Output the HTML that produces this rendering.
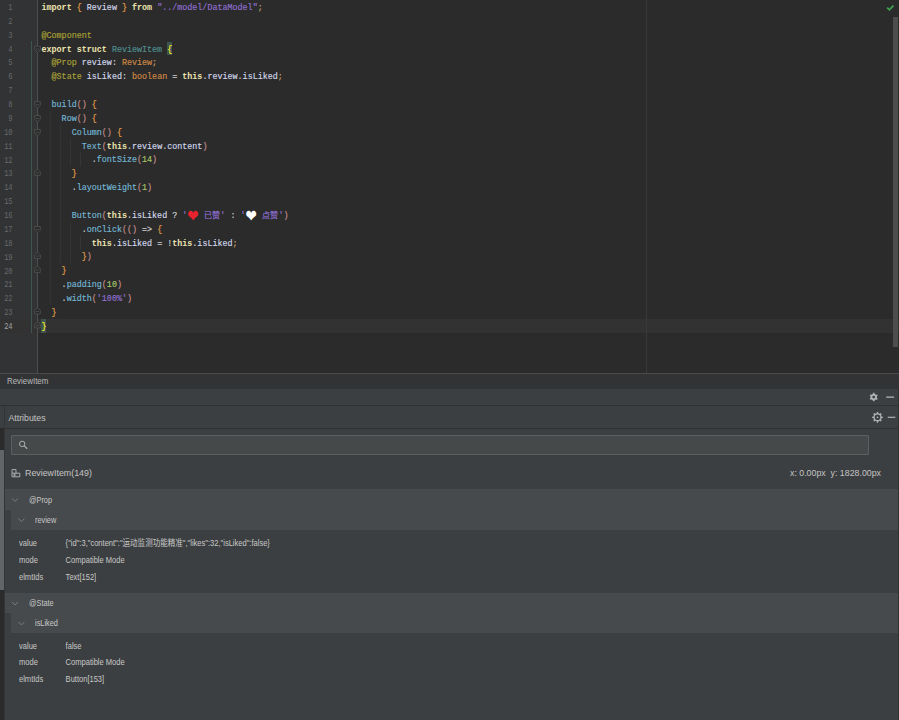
<!DOCTYPE html>
<html><head><meta charset="utf-8">
<style>
*{box-sizing:border-box;margin:0;padding:0}
html,body{width:899px;height:720px;overflow:hidden;background:#2b2b2b}
body{position:relative;font-family:"Liberation Sans","Noto Sans CJK SC",sans-serif;color:#bbbbbb}
.abs{position:absolute}
#editor{position:absolute;left:0;top:0;width:899px;height:373px;background:#2b2b2b;overflow:hidden}
#curline{position:absolute;left:0;top:319px;width:899px;height:14px;background:#323232}
#gutline{position:absolute;left:37px;top:0;width:1px;height:373px;background:#4e4e4e}
#margin{position:absolute;left:646px;top:0;width:1px;height:373px;background:#393939}
#vcs{position:absolute;left:31px;top:41px;width:1px;height:292px;background:#3f5554}
.ln{position:absolute;left:0;margin-top:2px;width:12.6px;transform:scaleX(.84);transform-origin:100% 50%;text-align:right;font:8.4px/13.87px "Liberation Mono",monospace;color:#676a6d;height:13.87px}
.ln.cur{color:#a4a3a3}
#code{position:absolute;left:41.5px;top:2px;font:8.39px/13.87px "Liberation Mono","Noto Sans CJK SC",monospace;color:#d4d4d4;white-space:pre;-webkit-text-stroke:0.15px currentColor}
.l{height:13.87px;display:block}
.k{color:#ebe3ae;font-weight:bold;-webkit-text-stroke:0}
.b{color:#e6a04a}
.i{color:#d3d8ec}
.s{color:#9170d2}
.z{color:#9170d2}
.sc{color:#c9a26d}
.d{color:#a9a236}
.c{color:#4f8f90}
.t{color:#d08a45}
.f{color:#74b6d4}
.n{color:#aac867}
.p{color:#c98f8f}
.o{color:#cfcfcf}
.m{color:#ffef28}
.hh{display:inline-block;width:11.2px;height:13px;text-align:center;font-family:"DejaVu Sans",sans-serif;font-weight:normal;font-size:13.5px;line-height:12.5px;vertical-align:top;-webkit-text-stroke:0;transform:scale(1,1.3);transform-origin:50% 50%}
.z{display:inline-block;width:16.8px;height:13px;font-size:8px;font-weight:normal;text-align:center;vertical-align:top;line-height:11.3px;-webkit-text-stroke:0.2px currentColor}
.h1{color:#e8222e}
.h2{color:#ffffff}
#scroll{position:absolute;left:893px;top:17px;width:5px;height:330px;background:#4d4d4d}
#crumb{position:absolute;left:0;top:373px;width:899px;height:16px;background:#313335;border-top:1px solid #4b4b4b;font-size:7.9px;line-height:15px;padding-left:7px;color:#bbbbbb}
#bar1{position:absolute;left:0;top:389px;width:899px;height:17px;background:#3c3f41;border-bottom:1px solid #2f3133}
#panel{position:absolute;left:0;top:406px;width:899px;height:314px;background:#3c3f41}
#hdr{position:absolute;left:5px;top:0;width:894px;height:23px;border-bottom:1px solid #323232;font-size:8.8px;line-height:24.4px;padding-left:3.4px;color:#c4c4c4}
#search{position:absolute;left:11px;top:29px;width:858px;height:20px;background:#45494a;border:1px solid #5c5f60;border-radius:1px}
.row{position:absolute;background:#464a4c;height:20.5px;font-size:7.6px;line-height:20.5px;color:#c8c8c8}
.row span{display:inline-block;transform:scale(.97,1.14);transform-origin:0 50%}
.kv{transform:scale(.992,1.14);transform-origin:0 55%;position:absolute;left:19px;font-size:7.6px;line-height:12px;height:12px;color:#c8c8c8;white-space:nowrap}
.kv b{position:absolute;left:47px;top:0;font-weight:normal}
</style></head><body>
<div id="editor">
<div class="abs" style="left:0;top:0;width:37px;height:373px;background:#313335"></div>
<div id="curline"></div>
<div class="abs" style="left:166.5px;top:41.6px;width:5.2px;height:13.9px;background:#3e544f"></div>
<div class="abs" style="left:41px;top:319px;width:5.2px;height:14px;background:#3e544f"></div>
<div id="gutline"></div>
<div id="margin"></div>
<div id="vcs"></div>
<div class="ln" style="top:0.00px">1</div><div class="ln" style="top:13.87px">2</div><div class="ln" style="top:27.74px">3</div><div class="ln" style="top:41.61px">4</div><div class="ln" style="top:55.48px">5</div><div class="ln" style="top:69.35px">6</div><div class="ln" style="top:83.22px">7</div><div class="ln" style="top:97.09px">8</div><div class="ln" style="top:110.96px">9</div><div class="ln" style="top:124.83px">10</div><div class="ln" style="top:138.70px">11</div><div class="ln" style="top:152.57px">12</div><div class="ln" style="top:166.44px">13</div><div class="ln" style="top:180.31px">14</div><div class="ln" style="top:194.18px">15</div><div class="ln" style="top:208.05px">16</div><div class="ln" style="top:221.92px">17</div><div class="ln" style="top:235.79px">18</div><div class="ln" style="top:249.66px">19</div><div class="ln" style="top:263.53px">20</div><div class="ln" style="top:277.40px">21</div><div class="ln" style="top:291.27px">22</div><div class="ln" style="top:305.14px">23</div><div class="ln cur" style="top:319.01px">24</div>
<svg class="abs" style="left:0;top:0" width="120" height="373" viewBox="0 0 120 373"><path d="M34.7 46.21h5.6v3.6l-2.8 2.8l-2.8 -2.8z" fill="#2b2b2b" stroke="#4f4f4f" stroke-width="0.9"/><path d="M35.9 49.21h3.2" stroke="#4f4f4f" stroke-width="0.9"/><path d="M34.7 101.69h5.6v3.6l-2.8 2.8l-2.8 -2.8z" fill="#2b2b2b" stroke="#4f4f4f" stroke-width="0.9"/><path d="M35.9 104.69h3.2" stroke="#4f4f4f" stroke-width="0.9"/><path d="M34.7 115.56h5.6v3.6l-2.8 2.8l-2.8 -2.8z" fill="#2b2b2b" stroke="#4f4f4f" stroke-width="0.9"/><path d="M35.9 118.56h3.2" stroke="#4f4f4f" stroke-width="0.9"/><path d="M34.7 129.43h5.6v3.6l-2.8 2.8l-2.8 -2.8z" fill="#2b2b2b" stroke="#4f4f4f" stroke-width="0.9"/><path d="M35.9 132.43h3.2" stroke="#4f4f4f" stroke-width="0.9"/><path d="M34.7 226.52h5.6v3.6l-2.8 2.8l-2.8 -2.8z" fill="#2b2b2b" stroke="#4f4f4f" stroke-width="0.9"/><path d="M35.9 229.52h3.2" stroke="#4f4f4f" stroke-width="0.9"/><path d="M37.5 168.94l2.8 2.8v3.6h-5.6v-3.6z" fill="#2b2b2b" stroke="#4f4f4f" stroke-width="0.9"/><path d="M35.9 172.84h3.2" stroke="#4f4f4f" stroke-width="0.9"/><path d="M37.5 252.16l2.8 2.8v3.6h-5.6v-3.6z" fill="#2b2b2b" stroke="#4f4f4f" stroke-width="0.9"/><path d="M35.9 256.06h3.2" stroke="#4f4f4f" stroke-width="0.9"/><path d="M37.5 266.03l2.8 2.8v3.6h-5.6v-3.6z" fill="#2b2b2b" stroke="#4f4f4f" stroke-width="0.9"/><path d="M35.9 269.93h3.2" stroke="#4f4f4f" stroke-width="0.9"/><path d="M37.5 307.64l2.8 2.8v3.6h-5.6v-3.6z" fill="#2b2b2b" stroke="#4f4f4f" stroke-width="0.9"/><path d="M35.9 311.54h3.2" stroke="#4f4f4f" stroke-width="0.9"/><path d="M37.5 321.51l2.8 2.8v3.6h-5.6v-3.6z" fill="#323232" stroke="#4f4f4f" stroke-width="0.9"/><path d="M35.9 325.41h3.2" stroke="#4f4f4f" stroke-width="0.9"/><path d="M50.3 111.0V305.1" stroke="#363636" stroke-width="1"/><path d="M60.3 124.8V263.5" stroke="#363636" stroke-width="1"/><path d="M70.4 138.7V166.4" stroke="#363636" stroke-width="1"/><path d="M80.5 152.6V166.4" stroke="#363636" stroke-width="1"/><path d="M70.4 221.9V263.5" stroke="#363636" stroke-width="1"/><path d="M80.5 235.8V249.7" stroke="#363636" stroke-width="1"/></svg>
<div id="code"><span class="l"><span class="k">import</span> <span class="b">{</span> <span class="i">Review</span> <span class="b">}</span> <span class="k">from</span> <span class="s">"../model/DataModel"</span><span class="sc">;</span></span><span class="l"></span><span class="l"><span class="d">@Component</span></span><span class="l"><span class="k">export struct</span> <span class="c">ReviewItem</span> <span class="m">{</span></span><span class="l">  <span class="d">@Prop</span> <span class="i">review</span><span class="o">:</span> <span class="t">Review</span><span class="sc">;</span></span><span class="l">  <span class="d">@State</span> <span class="i">isLiked</span><span class="o">:</span> <span class="t">boolean</span> <span class="o">=</span> <span class="k">this</span><span class="o">.</span><span class="i">review</span><span class="o">.</span><span class="i">isLiked</span><span class="sc">;</span></span><span class="l"></span><span class="l">  <span class="f">build</span><span class="p">()</span> <span class="b">{</span></span><span class="l">    <span class="f">Row</span><span class="p">()</span> <span class="b">{</span></span><span class="l">      <span class="f">Column</span><span class="p">()</span> <span class="b">{</span></span><span class="l">        <span class="f">Text</span><span class="p">(</span><span class="k">this</span><span class="o">.</span><span class="i">review</span><span class="o">.</span><span class="i">content</span><span class="p">)</span></span><span class="l">          <span class="o">.</span><span class="f">fontSize</span><span class="p">(</span><span class="n">14</span><span class="p">)</span></span><span class="l">      <span class="b">}</span></span><span class="l">      <span class="o">.</span><span class="f">layoutWeight</span><span class="p">(</span><span class="n">1</span><span class="p">)</span></span><span class="l"></span><span class="l">      <span class="f">Button</span><span class="p">(</span><span class="k">this</span><span class="o">.</span><span class="i">isLiked</span> <span class="o">?</span> <span class="s">'</span><span class="hh h1">❤</span> <span class="z">已赞</span><span class="s">'</span> <span class="o">:</span> <span class="s">'</span><span class="hh h2">❤</span> <span class="z">点赞</span><span class="s">'</span><span class="p">)</span></span><span class="l">        <span class="o">.</span><span class="f">onClick</span><span class="p">(()</span> <span class="o">=&gt;</span> <span class="b">{</span></span><span class="l">          <span class="k">this</span><span class="o">.</span><span class="i">isLiked</span> <span class="o">=</span> <span class="o">!</span><span class="k">this</span><span class="o">.</span><span class="i">isLiked</span><span class="sc">;</span></span><span class="l">        <span class="b">}</span><span class="p">)</span></span><span class="l">    <span class="b">}</span></span><span class="l">    <span class="o">.</span><span class="f">padding</span><span class="p">(</span><span class="n">10</span><span class="p">)</span></span><span class="l">    <span class="o">.</span><span class="f">width</span><span class="p">(</span><span class="s">'100%'</span><span class="p">)</span></span><span class="l">  <span class="b">}</span></span><span class="l"><span class="m">}</span></span></div>
<div id="scroll"></div>
<svg class="abs" style="left:880px;top:0" width="19" height="16" viewBox="880 0 19 16"><path d="M887.2 7.6 L889.4 9.8 L893.4 5.7" fill="none" stroke="#3fa650" stroke-width="1.7"/></svg>
</div>
<div id="crumb"><span style="display:inline-block;transform:scaleX(.9);transform-origin:0 50%;font-size:8.8px">ReviewItem</span></div>
<div id="bar1"></div>
<div id="panel">
 <div class="abs" style="left:0;top:0;width:4px;height:22px;background:#3c3f41"></div>
 <div class="abs" style="left:0;top:22px;width:4px;height:292px;background:#2b2b2b"></div>
 <div class="abs" style="left:0;top:44px;width:4px;height:140px;background:#626567"></div>
 <div class="abs" style="left:4px;top:0;width:1px;height:314px;background:#333537"></div>
 <div id="hdr">Attributes</div>
 <div id="search"></div>
 <div class="abs" style="left:25px;top:61px;font-size:8.85px;line-height:12px;color:#c4c4c4">ReviewItem(149)</div>
 <div class="abs" style="left:790px;top:61px;font-size:8.8px;line-height:12px;color:#c4c4c4;white-space:pre">x: 0.00px  y: 1828.00px</div>
 <div class="row" style="left:5px;top:83px;width:894px;padding-left:24px;padding-top:2.1px"><span>@Prop</span></div>
 <div class="row" style="left:11px;top:103.5px;width:888px;padding-left:24px;padding-top:1.4px"><span>review</span></div>
 <div class="kv" style="top:132.2px">value<b>{"id":3,"content":"运动监测功能精准","likes":32,"isLiked":false}</b></div>
 <div class="kv" style="top:149.2px">mode<b>Compatible Mode</b></div>
 <div class="kv" style="top:166.2px">elmtIds<b>Text[152]</b></div>
 <div class="row" style="left:5px;top:187px;width:894px;padding-left:24px;padding-top:1.3px;height:20px"><span>@State</span></div>
 <div class="row" style="left:11px;top:207px;width:888px;padding-left:24px;padding-top:0.9px;height:20px;line-height:20px"><span>isLiked</span></div>
 <div class="kv" style="top:235.2px">value<b>false</b></div>
 <div class="kv" style="top:251.2px">mode<b>Compatible Mode</b></div>
 <div class="kv" style="top:268.2px">elmtIds<b>Button[153]</b></div>
</div>
<div class="abs" style="left:898px;top:389px;width:1px;height:331px;background:#2e3032"></div>
<svg class="abs" style="left:0;top:0;pointer-events:none" width="899" height="720" viewBox="0 0 899 720"><path d="M872.76 393.94 L873.03 392.85 L874.37 392.85 L874.64 393.94 L875.97 394.71 L877.04 394.39 L877.71 395.56 L876.91 396.33 L876.91 397.87 L877.71 398.64 L877.04 399.81 L875.97 399.49 L874.64 400.26 L874.37 401.35 L873.03 401.35 L872.76 400.26 L871.43 399.49 L870.36 399.81 L869.69 398.64 L870.49 397.87 L870.49 396.33 L869.69 395.56 L870.36 394.39 L871.43 394.71Z M875.10 397.10 A1.4 1.4 0 1 0 872.30 397.10 A1.4 1.4 0 1 0 875.10 397.10Z" fill="#afb1b3" fill-rule="evenodd"/><rect x="886.2" y="396.5" width="7.9" height="1.3" fill="#afb1b3"/><path d="M876.61 413.25 L876.87 411.94 L878.13 411.94 L878.39 413.25 L879.74 413.80 L880.84 413.06 L881.74 413.96 L881.00 415.06 L881.55 416.41 L882.86 416.67 L882.86 417.93 L881.55 418.19 L881.00 419.54 L881.74 420.64 L880.84 421.54 L879.74 420.80 L878.39 421.35 L878.13 422.66 L876.87 422.66 L876.61 421.35 L875.26 420.80 L874.16 421.54 L873.26 420.64 L874.00 419.54 L873.45 418.19 L872.14 417.93 L872.14 416.67 L873.45 416.41 L874.00 415.06 L873.26 413.96 L874.16 413.06 L875.26 413.80Z M880.30 417.30 A2.8 2.8 0 1 0 874.70 417.30 A2.8 2.8 0 1 0 880.30 417.30Z" fill="#afb1b3" fill-rule="evenodd"/><circle cx="877.5" cy="417.3" r="0.9" fill="#afb1b3"/><rect x="887.7" y="416.7" width="7.6" height="1.2" fill="#afb1b3"/><circle cx="22.2" cy="443.9" r="2.7" fill="none" stroke="#b0b0b0" stroke-width="1"/><path d="M24.2 445.9L27.2 448.7" stroke="#b0b0b0" stroke-width="1.2"/><path d="M12 473.2V469.6h4v3.6M12 473.2h7.8v3.6h-7.8zM14.2 473.2v3.6M14.2 475h2" fill="none" stroke="#b8b8b8" stroke-width="0.9"/><path d="M12.1 498.4l2.9 3l2.9 -3" fill="none" stroke="#7d8082" stroke-width="0.9"/><path d="M18.5 518.6l2.9 3l2.9 -3" fill="none" stroke="#7d8082" stroke-width="0.9"/><path d="M12.1 602l2.9 3l2.9 -3" fill="none" stroke="#7d8082" stroke-width="0.9"/><path d="M18.5 622l2.9 3l2.9 -3" fill="none" stroke="#7d8082" stroke-width="0.9"/></svg>
</body></html>
